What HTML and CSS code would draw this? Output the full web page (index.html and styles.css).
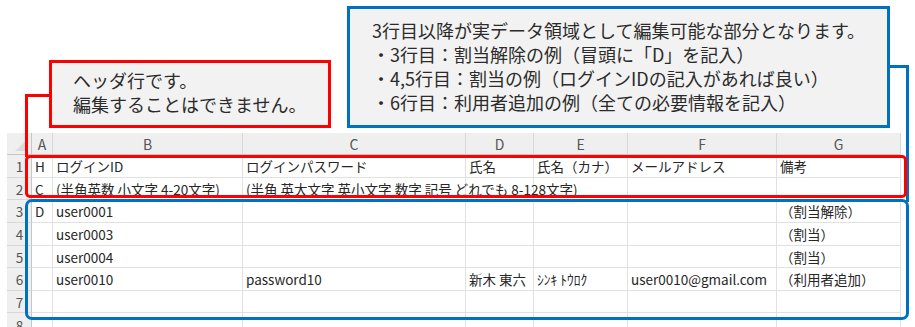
FILE: index.html
```html
<!DOCTYPE html>
<html lang="ja">
<head>
<meta charset="utf-8">
<title>Sheet</title>
<link rel="stylesheet" href="styles.css">
</head>
<body>
<div class="page">
  <div class="callouts">
    <div class="note note-red">
      <p>ヘッダ行です。<br>編集することはできません。</p>
    </div>
    <div class="note note-blue">
      <p>3行目以降が実データ領域として編集可能な部分となります。<br>・3行目：割当解除の例（冒頭に「D」を記入）<br>・4,5行目：割当の例（ログインIDの記入があれば良い）<br>・6行目：利用者追加の例（全ての必要情報を記入）</p>
    </div>
  </div>

  <div class="sheet">
    <div class="corner"></div>
    <div class="colhead">A</div>
    <div class="colhead">B</div>
    <div class="colhead">C</div>
    <div class="colhead">D</div>
    <div class="colhead">E</div>
    <div class="colhead">F</div>
    <div class="colhead">G</div>

    <div class="rowhead">1</div>
    <div class="cell">H</div>
    <div class="cell">ログインID</div>
    <div class="cell">ログインパスワード</div>
    <div class="cell">氏名</div>
    <div class="cell">氏名（カナ）</div>
    <div class="cell">メールアドレス</div>
    <div class="cell">備考</div>

    <div class="rowhead">2</div>
    <div class="cell">C</div>
    <div class="cell">(半角英数 小文字 4-20文字)</div>
    <div class="cell cell-over">(半角 英大文字 英小文字 数字 記号 どれでも 8-128文字)</div>
    <div class="cell"></div>
    <div class="cell"></div>
    <div class="cell"></div>
    <div class="cell"></div>

    <div class="rowhead">3</div>
    <div class="cell">D</div>
    <div class="cell">user0001</div>
    <div class="cell"></div>
    <div class="cell"></div>
    <div class="cell"></div>
    <div class="cell"></div>
    <div class="cell">（割当解除）</div>

    <div class="rowhead">4</div>
    <div class="cell"></div>
    <div class="cell">user0003</div>
    <div class="cell"></div>
    <div class="cell"></div>
    <div class="cell"></div>
    <div class="cell"></div>
    <div class="cell">（割当）</div>

    <div class="rowhead">5</div>
    <div class="cell"></div>
    <div class="cell">user0004</div>
    <div class="cell"></div>
    <div class="cell"></div>
    <div class="cell"></div>
    <div class="cell"></div>
    <div class="cell">（割当）</div>

    <div class="rowhead">6</div>
    <div class="cell"></div>
    <div class="cell">user0010</div>
    <div class="cell">password10</div>
    <div class="cell">新木 東六</div>
    <div class="cell">ｼﾝｷ ﾄｳﾛｸ</div>
    <div class="cell">user0010@gmail.com</div>
    <div class="cell">（利用者追加）</div>

    <div class="rowhead">7</div>
    <div class="cell"></div>
    <div class="cell"></div>
    <div class="cell"></div>
    <div class="cell"></div>
    <div class="cell"></div>
    <div class="cell"></div>
    <div class="cell"></div>

    <div class="rowhead rowhead-last">8</div>
    <div class="cell"></div>
    <div class="cell"></div>
    <div class="cell"></div>
    <div class="cell"></div>
    <div class="cell"></div>
    <div class="cell"></div>
    <div class="cell"></div>
  </div>

  <div class="line red-h"></div>
  <div class="line red-v"></div>
  <div class="frame red-frame"></div>
  <div class="line blue-h"></div>
  <div class="line blue-v"></div>
  <div class="frame blue-frame"></div>
</div>
</body>
</html>
```

FILE: styles.css
```css
* { box-sizing: border-box; }
html, body {
  margin: 0;
  padding: 0;
  background: #ffffff;
}
body {
  font-family: "Noto Sans CJK JP", "Noto Sans", sans-serif;
  color: #262626;
}
.page {
  position: relative;
  width: 915px;
  height: 327px;
  overflow: hidden;
}
.callouts {
  display: flex;
  align-items: flex-end;
  gap: 16px;
  padding: 6px 0 0 49px;
  height: 128px;
}
.note {
  background: #f2f2f2;
  border: 3px solid;
  display: flex;
  align-items: center;
}
.note p {
  margin: 0;
  font-size: 18px;
  line-height: 24px;
  color: #2b2b2b;
  white-space: nowrap;
}
.note-red {
  border-color: #ff0000;
  width: 282px;
  height: 68px;
  padding: 0 0 4px 21px;
}
.note-blue {
  border-color: #0070c0;
  width: 543px;
  height: 122px;
  padding: 0 0 2px 22px;
}

.sheet {
  margin: 5px 0 0 7px;
  display: grid;
  grid-template-columns: 25px 21px 190px 223px 68px 94px 149px 124px;
  grid-template-rows: 22px 23px 22px 23px 23px 22px 23px 22px 22px;
  width: 894px;
}
.corner, .colhead, .rowhead, .cell {
  border-right: 1px solid #e1e1e1;
  border-bottom: 1px solid #e1e1e1;
  display: flex;
  align-items: center;
  white-space: nowrap;
}
.corner {
  background: #efefef;
  position: relative;
  border-right-color: #c6c6c6;
  border-bottom-color: #c6c6c6;
}
.corner::after {
  content: "";
  position: absolute;
  right: 4px;
  bottom: 3px;
  width: 0;
  height: 0;
  border-left: 12px solid transparent;
  border-bottom: 11px solid #dadada;
}
.colhead {
  background: #efefef;
  justify-content: center;
  font-size: 14px;
  color: #555555;
  border-right-color: #d8d8d8;
  border-bottom-color: #c6c6c6;
  padding-top: 1px;
}
.rowhead {
  background: #efefef;
  justify-content: center;
  font-size: 13.5px;
  color: #555555;
  border-right-color: #c6c6c6;
  border-bottom-color: #d8d8d8;
  padding-left: 1px;
}
.rowhead-last {
  align-items: flex-start;
  padding-top: 5px;
  line-height: 14px;
}
.cell {
  font-size: 13.5px;
  color: #262626;
  padding-left: 3px;
  overflow: visible;
}
.cell-over {
  position: relative;
  z-index: 1;
}

.line { position: absolute; }
.red-h {
  left: 25px; top: 94px; width: 25px; height: 3px;
  background: #ff0000;
}
.red-v {
  left: 25px; top: 94px; width: 3px; height: 63px;
  background: #ff0000;
}
.blue-h {
  left: 889px; top: 65px; width: 20px; height: 3px;
  background: #0070c0;
}
.blue-v {
  left: 906px; top: 65px; width: 3px; height: 137px;
  background: #0070c0;
}
.frame {
  position: absolute;
  border: 3px solid;
}
.red-frame {
  left: 25px; top: 155px; width: 882px; height: 43px;
  border-color: #ff0000;
  border-radius: 5px;
  z-index: 2;
}
.blue-frame {
  left: 25px; top: 199px; width: 884px; height: 121px;
  border-color: #0070c0;
  border-radius: 7px;
  z-index: 2;
}
```
